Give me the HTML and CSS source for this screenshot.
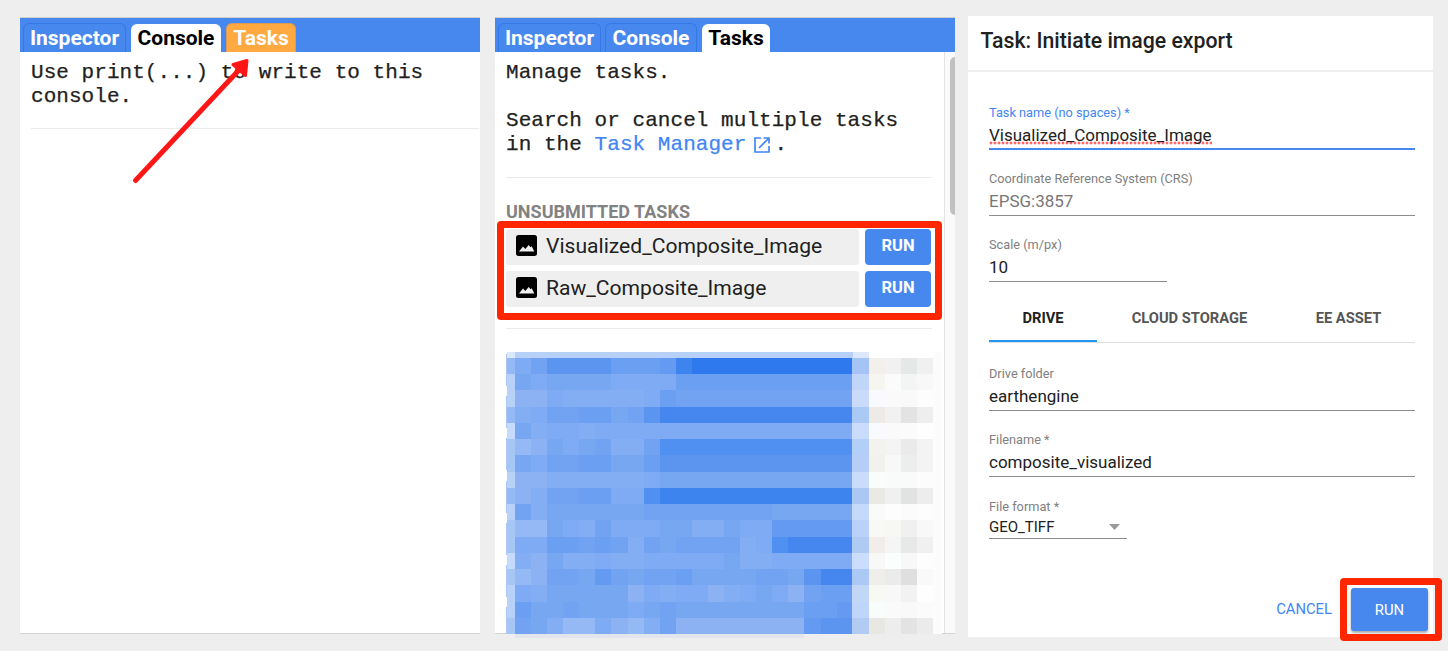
FILE: index.html
```html
<!DOCTYPE html>
<html lang="en">
<head>
<meta charset="utf-8">
<title>Export tasks</title>
<link rel="stylesheet" href="styles.css">
</head>
<body>
<section class="panel">
  <nav class="tabs">
    <span class="tab">Inspector</span>
    <span class="tab console active">Console</span>
    <span class="tab tasks alert">Tasks</span>
  </nav>
  <div class="content">
    <p class="mono">Use print(...) to write to this<br>console.</p>
    <hr class="rule wide">
  </div>
</section>

<section class="panel second">
  <nav class="tabs">
    <span class="tab">Inspector</span>
    <span class="tab console">Console</span>
    <span class="tab tasks active">Tasks</span>
  </nav>
  <div class="split">
    <div class="content">
      <p class="mono">Manage tasks.<br><br>Search or cancel multiple tasks<br>in the <a class="link">Task Manager<svg class="ext" viewBox="0 0 18 18"><path d="M8 2H2v14h14v-6M10.5 2H16v5.500M16 2L6 12" fill="none" stroke="currentColor" stroke-width="1.700"/></svg></a>.</p>
      <hr class="rule">
      <h2 class="heading">UNSUBMITTED TASKS</h2>
      <div class="task"><div class="name"><svg class="pic" viewBox="0 0 21 21"><rect width="21" height="21" rx="2.500"/><path d="M3 16.500l4-5 2.300 2.500 3.400-4 1.800 2.300 1.200-1 2.600 5.200z" fill="#efefef"/></svg><span>Visualized_Composite_Image</span></div><button class="run">RUN</button></div>
      <div class="task"><div class="name"><svg class="pic" viewBox="0 0 21 21"><rect width="21" height="21" rx="2.500"/><path d="M3 16.500l4-5 2.300 2.500 3.400-4 1.800 2.300 1.200-1 2.600 5.200z" fill="#efefef"/></svg><span>Raw_Composite_Image</span></div><button class="run">RUN</button></div>
      <hr class="rule last">
      <svg class="mosaic" id="mosaic" width="437" height="287" viewBox="506 351 437 287" shape-rendering="crispEdges"></svg>
    </div>
    <div class="scroll"><div class="thumb"></div></div>
  </div>
</section>

<section class="dialog">
  <h1 class="title">Task: Initiate image export</h1>
  <form class="form">
    <div class="field focus"><label>Task name (no spaces) *</label><div class="value"><span class="typo">Visualized_Composite_Image</span></div></div>
    <div class="field muted"><label>Coordinate Reference System (CRS)</label><div class="value">EPSG:3857</div></div>
    <div class="field short"><label>Scale (m/px)</label><div class="value">10</div></div>
    <div class="dests"><span class="dest on">DRIVE</span><span class="dest cloud">CLOUD STORAGE</span><span class="dest asset">EE ASSET</span></div>
    <div class="field"><label>Drive folder</label><div class="value">earthengine</div></div>
    <div class="field"><label>Filename *</label><div class="value">composite_visualized</div></div>
    <div class="field select"><label>File format *</label><div class="value"><span>GEO_TIFF</span><svg width="11" height="6"><path d="M0 0h11L5.500 6z" fill="#999"/></svg></div></div>
  </form>
  <div class="actions"><span class="cancel">CANCEL</span><button class="submit">RUN</button></div>
</section>

<div class="mark mark-tasks"></div>
<div class="mark mark-run"></div>
<svg class="arrow" width="130" height="140" viewBox="125 50 130 140"><path d="M135.500 180.500L239 70" stroke="#ff1616" stroke-width="5" stroke-linecap="round"/><path d="M247 60.500L233 64.500 245.500 75.500z" fill="#ff1616" stroke="#ff1616" stroke-width="3" stroke-linejoin="round"/></svg>
<script src="mosaic.js"></script>
</body>
</html>
```

FILE: styles.css
```css
* { box-sizing: border-box; }
body { margin: 0; width: 1448px; height: 651px; overflow: hidden; position: relative; background: #eee; display: flex; align-items: flex-start; padding: 17px 0 0 20px; font-family: Roboto, "Liberation Sans", sans-serif; color: #212121; }
p, h1, h2 { margin: 0; }
button { border: 0; padding: 0; font-family: inherit; color: #fff; background: #4788ee; }
.panel { width: 460px; height: 617px; background: #fff; border-top: 1px solid #cfcfc9; border-bottom: 1px solid #d4d4d4; margin-right: 15px; flex: none; }
.second { margin-right: 13px; }
.tabs { height: 34px; background: #4788ee; display: flex; align-items: flex-end; padding-left: 3px; }
.tab { height: 29px; width: 103px; margin-right: 4px; border: 1px solid #3478e8; border-bottom: 0; border-radius: 6px 6px 0 0; color: #fff; font-weight: 700; font-size: 21px; line-height: 28px; text-align: center; white-space: nowrap; }
.tab.console { width: 92px; }
.tab.tasks { width: 70px; }
.tab.active { background: #fff; color: #000; border-width: 0; height: 28px; margin: 0 5px 0 1px; width: 90px; }
.tab.tasks.active { width: 68px; }
.tab.alert { background: #ffa940; border-color: #d99b57; }
.content { padding: 9px 0 0 11px; }
.mono { font: 21px/24px "Liberation Mono", monospace; letter-spacing: .05px; -webkit-text-stroke: .25px currentColor; white-space: nowrap; }
.rule { border: 0; height: 1px; background: #ebebeb; margin: 19px 0 0; }
.rule.wide { margin-right: 1px; }
.link { color: #4285f4; }
.ext { width: 18px; height: 18px; margin: 0 3px 0 7px; vertical-align: -4px; }
.split { display: flex; height: 581px; }
.second .content { width: 449px; flex: none; }
.second .rule, .heading, .task { width: 426px; margin-left: 0; }
.second .rule { margin-top: 20px; }
.heading { font-size: 18px; line-height: 22px; margin-top: 23px; color: #828282; font-weight: 700; }
.task { display: flex; gap: 6px; height: 36px; margin-top: 6px; }
.name { width: 353px; border-radius: 3px; background: #efefef; display: flex; align-items: center; padding-left: 10px; font-size: 21.100px; line-height: 32px; }
.name span { margin: -3px 0 0 9px; }
.pic { width: 21px; height: 21px; margin-top: -3px; }
.run { width: 66px; border-radius: 4px; font-size: 16.500px; font-weight: 700; line-height: 34px; padding-bottom: 2px; }
.second .rule.last { margin-top: 21px; }
.mosaic { display: block; margin-top: 22px; }
.scroll { width: 11px; background: #fafafa; border-left: 1px solid #e3e3e3; padding: 5px 0 0 5px; }
.thumb { height: 158px; background: #c1c1c1; border-radius: 5px 0 0 5px; }
.dialog { width: 465px; height: 621px; margin-top: -1px; background: #fff; flex: none; }
.title { height: 56px; border-bottom: 2px solid #eee; font-size: 21.250px; font-weight: 500; line-height: 50px; padding-left: 12.500px; white-space: nowrap; }
.form { padding: 31px 18px 0 21px; }
.field { height: 66px; }
.field label { display: block; font-size: 12.750px; line-height: 20px; color: #808080; white-space: nowrap; }
.value { font-size: 17px; line-height: 24px; height: 27px; border-bottom: 1px solid #8c8c8c; }
.focus label { color: #4285f4; }
.focus .value { border-bottom: 2px solid #4788ee; }
.typo { display: inline-block; height: 22px; background: radial-gradient(circle, #f66 1.300px, transparent 1.700px) 0 100% / 4px 4px repeat-x; }
.muted .value { color: #777; }
.short { width: 178px; }
.dests { height: 43px; margin: -1px 0 21px; border-bottom: 1px solid #ddd; display: flex; font-size: 14.700px; font-weight: 700; line-height: 36px; color: #555; white-space: nowrap; }
.dest { width: 108px; text-align: center; }
.dest.on { color: #212121; border-bottom: 2px solid #2196f3; height: 42px; }
.dest.cloud { width: 185px; }
.dest.asset { width: 133px; }
.select { width: 138px; padding-top: 1px; }
.select .value { font-size: 15px; line-height: 20px; height: 22px; display: flex; justify-content: space-between; padding-right: 7px; }
.select svg { margin-top: 7px; }
.actions { display: flex; justify-content: flex-end; padding: 26px 5px 0 0; }
.cancel { color: #4285f4; font-size: 14.800px; line-height: 43px; margin-right: 19px; }
.submit { width: 77px; height: 43px; border-radius: 3px; font-size: 14.800px; box-shadow: 0 2px 3px rgba(0,0,0,.35); }
.mark { position: absolute; border: 7px solid #ff2600; border-radius: 4px; }
.mark-tasks { left: 497px; top: 221px; width: 445px; height: 99px; }
.mark-run { left: 1340px; top: 578px; width: 102px; height: 63px; }
.arrow { position: absolute; left: 125px; top: 50px; }
```

FILE: mosaic.js
```js
// Pixelated task history: one letter per cell, light cell last, then four neutral cells.
const shades = {
  a: "#2e79ed", b: "#3e84ef", c: "#4587ef", d: "#5090f0", e: "#5b95ef", f: "#649af1",
  g: "#6b9ff2", h: "#72a3f2", i: "#78a7f2", j: "#7eabf3", k: "#84aef4", l: "#8cb2f3",
  m: "#95b9f4", n: "#a6c6f6", o: "#b8d1f9", p: "#c6dafb"
};
const rows = [
  ["m", "jheeeegggfb" + "a".repeat(10), "#a5c3f4", "#f3efea #f1f1f1 #e4e8e7 #f0f0f0"],
  ["o", "ijiiiijjjj" + "g".repeat(11), "#c1d5f8", "#f7f5f0 #fbfbfb #f3f5f4 #f8f8f8"],
  ["o", "lljkkkkkjg" + "h".repeat(11), "#c9dafa", "#f8fafd #fafafa #f9f9f9 #fdfdfd"],
  ["m", "kjhhggihe" + "c".repeat(12), "#abc9f5", "#eeeae7 #f1f1f1 #e3e3e3 #eeeeee"],
  ["p", "ikjjk" + "j".repeat(16), "#c9dcfb", "#f8fafd #fafafa #fbfbfb #fefefe"],
  ["n", "mlijihkkh" + "d".repeat(12), "#b4cff7", "#f3f2ed #f4f4f4 #eaeaea #f3f3f3"],
  ["n", "ijhhggiig" + "e".repeat(12), "#b5cdf7", "#f2f1ed #f8f8f8 #ebeeed #f3f3f3"],
  ["o", "llkkkkkkj" + "i".repeat(12), "#c9dcfb", "#fafcfb #f9fbfa #f9fbfa #fcfcfc"],
  ["m", "lkhhggjjd" + "b".repeat(12), "#abc8f3", "#ebe9e4 #f0f0f0 #e1e3e2 #ededed"],
  ["o", "hkiiiiiihhhhhhhhiiiii", "#c5d9fa", "#fafafa #fdfdfd #fbfbfb #fdfdfd"],
  ["n", "mmijkhjjjiikkijjfffff", "#bad2f9", "#f8f8f5 #f7f7f4 #f0f0f0 #f8f8f8"],
  ["n", "jjgghghkhihhhhkjdcccc", "#afcbf4", "#f2edeb #f5f5f5 #e6e9e8 #f0f0f0"],
  ["p", "klikkjkkjjjjjikkjjjjj", "#cbddfc", "#f8f8f8 #fafefc #f8f8f8 #fdfdfd"],
  ["n", "mlhhifhihhgiiiihhiecc", "#acc9f6", "#f0eeea #ebebeb #dfdfdf #f9f9f9"],
  ["o", "jkiiiiiljkjjlkjijlhgg", "#c2d6f6", "#f8f9f3 #f8f8f8 #f2f2f2 #fefefe"],
  ["o", "giihiiijihiiiiiiiiggf", "#c0d5fb", "#f8fcfa #fafafa #f9f9f9 #fbfbfb"],
  ["n", "hikmmjlmkhllllllllfee", "#b2cbf2", "#e9e7e2 #ededed #e3e3e3 #ebebeb"]
];
const svg = document.getElementById("mosaic");
function cell(x, y, x2, y2, fill) {
  const r = document.createElementNS("http://www.w3.org/2000/svg", "rect");
  r.setAttribute("x", x);
  r.setAttribute("y", y);
  r.setAttribute("width", x2 - x);
  r.setAttribute("height", y2 - y);
  r.setAttribute("fill", fill);
  svg.appendChild(r);
}
cell(933, 352, 942, 634, "#fcfcfc");
cell(507, 352, 515, 358, "#dbe7fc");
cell(515, 352, 853, 358, "#b6d0f8");
cell(853, 352, 869, 358, "#dce8fc");
cell(515, 634, 804, 638, "#e2e6ec");
for (let y = 354; y < 634; y += 42.2) cell(506, y, 507, Math.min(y + 32, 634), "#a9c8f5");
const edge = (k) => Math.round(515 + k * 16.08);
rows.forEach((row, n) => {
  const top = Math.round(358 + n * 16.24);
  const bottom = Math.round(358 + (n + 1) * 16.24);
  cell(507, top, 515, bottom, shades[row[0]]);
  [...row[1]].forEach((s, k) => cell(edge(k), top, k === 20 ? 852 : edge(k + 1), bottom, shades[s]));
  cell(852, top, 869, bottom, row[2]);
  row[3].split(" ").forEach((c, k) => cell(869 + k * 16, top, 885 + k * 16, bottom, c));
});
```
